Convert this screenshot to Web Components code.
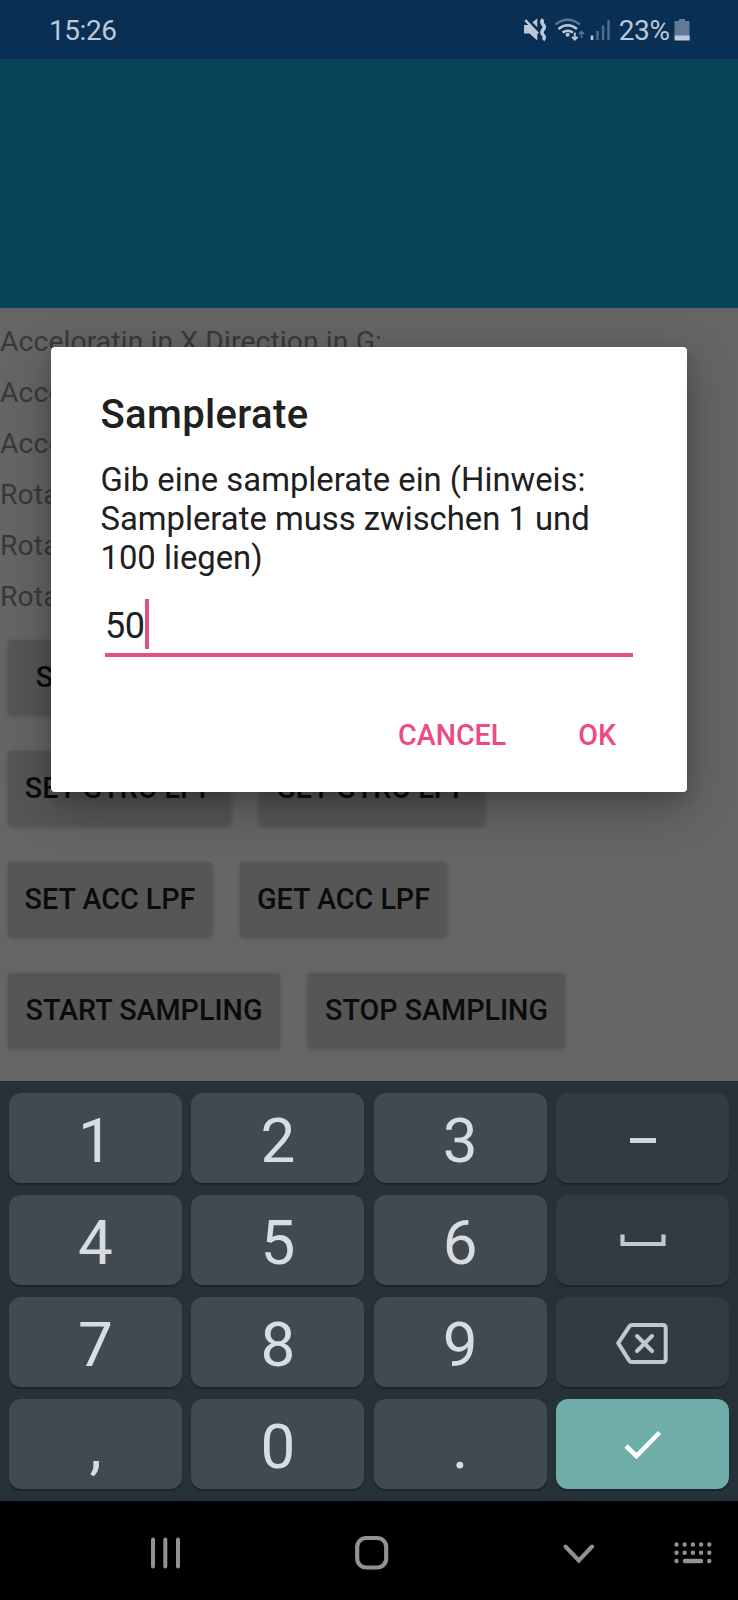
<!DOCTYPE html>
<html lang="de">
<head>
<meta charset="utf-8">
<title>Samplerate</title>
<style>
html,body{margin:0;padding:0;background:#000;overflow:hidden}
body{font-family:Roboto,"Noto Sans",sans-serif;width:738px;height:1600px}
</style>
</head>
<body>
<phone-screen></phone-screen>
<script>
const define = (name, html, setup) => customElements.define(name, class extends HTMLElement {
  constructor() {
    super();
    this.attachShadow({mode: 'open'}).innerHTML = html;
  }
  connectedCallback() { if (setup) setup(this, this.shadowRoot); }
});

define('status-bar', `
<style>
:host{display:flex;box-sizing:border-box;height:59px;background:#0a2f54;color:#bdc9d9;padding:0 47.500px 0 49px;align-items:center;justify-content:space-between;font-size:28px;line-height:34px}
.time{letter-spacing:-.45px;padding-top:3px}
.right{display:flex;align-items:center}
.pct{padding-top:2px;letter-spacing:-.4px;margin-left:8px;margin-right:4px}
svg{display:block}
</style>
<span class="time">15:26</span>
<span class="right">
<svg width="88" height="24" viewBox="522 18 88 24" fill="none">
  <path d="M523 25h5.500L536.300 33v7.500L528.500 33.500H523z" fill="#bdc9d9"/>
  <path d="M524.300 20.200L537 33.500" stroke="#bdc9d9" stroke-width="2.400"/>
  <path d="M531.300 22.200L536.300 18.500v8.800z" fill="#bdc9d9"/>
  <path d="M541.300 19q-2.500 2.600 0 5.200t0 5.200 0 5.200 0 5" stroke="#bdc9d9" stroke-width="3.400" transform="translate(.8 .3)"/>
  <path d="M554.500 24.500q12-9.500 24.500 0" stroke="#5c7591" stroke-width="2.200"/>
  <path d="M557.500 29q9-7.500 18.500 0M561.500 32.500q5-3.500 10.500 0" stroke="#bdc9d9" stroke-width="2.400"/>
  <circle cx="566.600" cy="34.800" r="2" fill="#bdc9d9"/>
  <path d="M573.800 32.500v7M571 36.800l2.800 2.800 2.800-2.800" stroke="#bdc9d9" stroke-width="1.900"/>
  <path d="M580.500 38v-6M578 34l2.500-2.500L583 34" stroke="#5c7591" stroke-width="1.600"/>
  <path d="M591 35.500v4.500" stroke="#bdc9d9" stroke-width="2.600"/>
  <path d="M596.500 31v9M602 25.500V40M607.500 20v20" stroke="#526d8a" stroke-width="2.400"/>
</svg>
<span class="pct">23%</span>
<svg width="17" height="24" viewBox="0 0 17 24"><path d="M5 1h6v2h4.500v15h-15V3H5z" fill="#627a96"/><path d="M.5 17.500h15.200v5H.5z" fill="#bdc9d9"/></svg>
</span>`);

define('sensor-line', `
<style>:host{display:block;height:51.200px;line-height:51.200px;font-size:28.300px;color:#393939;white-space:nowrap;letter-spacing:.1px}</style><slot></slot>`);

define('app-button', `
<style>:host{display:flex;box-sizing:border-box;height:75px;border-radius:4px;background:#565656;color:#0b0b0b;font-size:28.700px;font-weight:500;line-height:34px;align-items:center;justify-content:center;white-space:nowrap;box-shadow:0 1px 4px rgba(0,0,0,.2)}</style><slot></slot>`,
 el => { el.style.width = el.getAttribute('width') + 'px'; });

define('button-row', `<style>:host{display:flex;gap:28px;padding-left:8px;margin-bottom:36px}</style><slot></slot>`);

define('input-dialog', `
<style>
:host{position:absolute;left:51px;top:347px;width:636px;height:445px;box-sizing:border-box;background:#fff;border-radius:4px;color:#202020;padding:44px 50px 0 49.500px;box-shadow:0 14px 46px rgba(0,0,0,.3),0 6px 14px rgba(0,0,0,.12)}
h1{margin:0;font-size:40px;line-height:48px;font-weight:500;letter-spacing:.35px}
p{margin:22px 0 0;font-size:32.800px;line-height:39px;white-space:nowrap}
.field{display:flex;align-items:center;box-sizing:border-box;margin:21px 4px 0;width:528px;height:58px;border-bottom:4px solid #e24f83;padding-bottom:4px;font-size:36px}
.field span{padding-top:4px;padding-left:.5px;letter-spacing:-.4px}
.field i{width:4px;height:50px;background:#e24f83}
.actions{display:flex;justify-content:flex-end;gap:72px;padding-right:21px;margin-top:60px;color:#ec4b82;font-size:28.600px;line-height:36px;font-weight:500}
</style>
<h1>Samplerate</h1>
<p>Gib eine samplerate ein (Hinweis:<br>Samplerate muss zwischen 1 und<br>100 liegen)</p>
<div class="field"><span>50</span><i></i></div>
<div class="actions"><span>CANCEL</span><span>OK</span></div>`);

define('key-cap', `
<style>
:host{display:flex;align-items:center;justify-content:center;background:#424a51;color:#dadde0;border-radius:12px;box-shadow:0 2px 1px #1c252b;font-size:62px;line-height:70px;padding-top:6px;box-sizing:border-box;height:90px}
:host([kind=fn]),:host([kind=go]){padding:0 0 0 1px}
:host([kind=fn]){background:#323b42}
:host([kind=go]){background:#6fada8}
</style><slot></slot>`);

define('num-pad', `
<style>
:host{display:grid;box-sizing:border-box;height:420px;padding:12px 9px;background:#273138;grid-template-columns:repeat(4,1fr);column-gap:9.300px;row-gap:12px;align-content:start}
svg{display:block}
</style>
<key-cap>1</key-cap><key-cap>2</key-cap><key-cap>3</key-cap>
<key-cap kind="fn"><svg width="60" height="60" viewBox="0 0 60 60"><path d="M17 32.500h26" stroke="#d3d7da" stroke-width="5"/></svg></key-cap>
<key-cap>4</key-cap><key-cap>5</key-cap><key-cap>6</key-cap>
<key-cap kind="fn"><svg width="60" height="60" viewBox="0 0 60 60"><path d="M9.500 24.500v9.500h41v-9.500" stroke="#c3c8cc" stroke-width="4.200" fill="none"/></svg></key-cap>
<key-cap>7</key-cap><key-cap>8</key-cap><key-cap>9</key-cap>
<key-cap kind="fn"><svg width="60" height="60" viewBox="0 0 60 60" fill="none" stroke="#c3c8cc" stroke-width="4" stroke-linejoin="round" stroke-linecap="round"><path d="M5.500 31.500L16.500 15q1-1.500 3-1.500H50q3 0 3 3v31q0 3-3 3H19.500q-2 0-3-1.500z" transform="translate(-.3 -.4)"/><path d="M24 24l15 15M39 24l-15 15"/></svg></key-cap>
<key-cap>,</key-cap><key-cap>0</key-cap><key-cap>.</key-cap>
<key-cap kind="go"><svg width="60" height="60" viewBox="0 0 60 60"><path d="M13 32L23.500 42L46.500 18.500" stroke="#fff" stroke-width="4.600" fill="none"/></svg></key-cap>`);

define('nav-bar', `
<style>:host{display:block;height:99px;background:#000}svg{display:block}</style>
<svg width="738" height="99" viewBox="0 1501 738 99" fill="none" stroke="#929292" stroke-linecap="round">
<path d="M153 1539.500v27M165.300 1539.500v27M178 1539.500v27" stroke-width="4"/>
<rect x="357.200" y="1538" width="29" height="29.500" rx="9" stroke-width="4.200"/>
<path d="M565.500 1546.500l13.300 14 13.300-14" stroke-width="4"/>
<g stroke-width="4.400"><path d="M676.500 1544.500h33M676.500 1552.800h33" stroke-dasharray="0 8.200"/><path d="M676.500 1561h.01M709.300 1561h.01M685 1561h16"/></g>
</svg>`);

define('phone-screen', `
<style>
:host{display:flex;flex-direction:column;width:738px;height:1600px;position:relative;background:#656565}
.banner{height:249px;background:#08445a}
main{height:773px;box-sizing:border-box;padding-top:7.500px;overflow:hidden}
.lines{height:324px}
</style>
<status-bar></status-bar>
<div class="banner"></div>
<main>
<div class="lines">
<sensor-line>Acceloratin in X Direction in G:</sensor-line>
<sensor-line>Acceloratin in Y Direction in G:</sensor-line>
<sensor-line>Acceloratin in Z Direction in G:</sensor-line>
<sensor-line>Rotation in X Direction:</sensor-line>
<sensor-line>Rotation in Y Direction:</sensor-line>
<sensor-line>Rotation in Z Direction:</sensor-line>
</div>
<button-row><app-button width="294">SET SAMPLERATE</app-button></button-row>
<button-row><app-button width="223">SET GYRO LPF</app-button><app-button width="226">GET GYRO LPF</app-button></button-row>
<button-row><app-button width="204">SET ACC LPF</app-button><app-button width="207">GET ACC LPF</app-button></button-row>
<button-row><app-button width="272">START SAMPLING</app-button><app-button width="257">STOP SAMPLING</app-button></button-row>
</main>
<num-pad></num-pad>
<nav-bar></nav-bar>
<input-dialog></input-dialog>`);
</script>
</body>
</html>
